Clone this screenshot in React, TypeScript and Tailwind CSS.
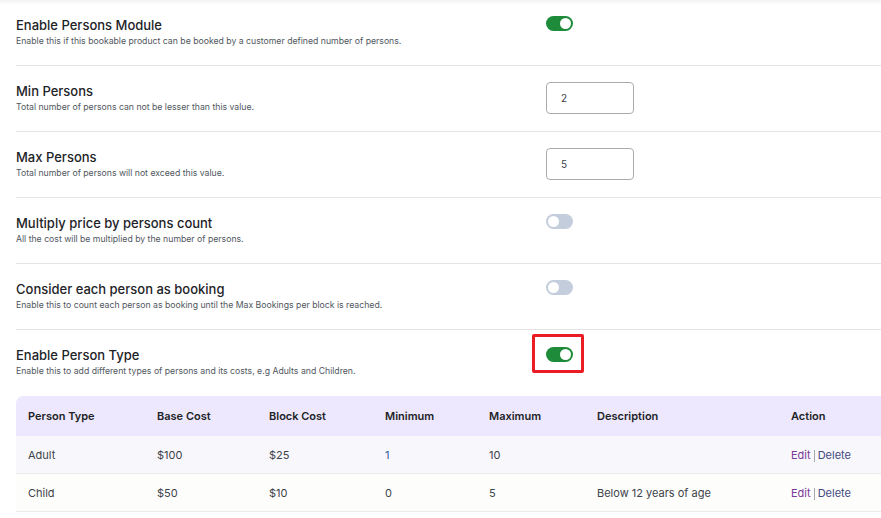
import React from 'react';

type Setting = {
  title: string;
  desc: string;
  control: 'on' | 'off' | 'input' | 'highlight';
  value?: string;
};

const settings: Setting[] = [
  { title: 'Enable Persons Module', desc: 'Enable this if this bookable product can be booked by a customer defined number of persons.', control: 'on' },
  { title: 'Min Persons', desc: 'Total number of persons can not be lesser than this value.', control: 'input', value: '2' },
  { title: 'Max Persons', desc: 'Total number of persons will not exceed this value.', control: 'input', value: '5' },
  { title: 'Multiply price by persons count', desc: 'All the cost will be multiplied by the number of persons.', control: 'off' },
  { title: 'Consider each person as booking', desc: 'Enable this to count each person as booking until the Max Bookings per block is reached.', control: 'off' },
  { title: 'Enable Person Type', desc: 'Enable this to add different types of persons and its costs, e.g Adults and Children.', control: 'highlight' },
];

const rows = [
  { type: 'Adult', base: '$100', block: '$25', min: '1', max: '10', desc: '' },
  { type: 'Child', base: '$50', block: '$10', min: '0', max: '5', desc: 'Below 12 years of age' },
];

function Toggle({ on }: { on: boolean }) {
  return (
    <div
      className={`flex h-[15px] w-[27px] items-center rounded-full px-[2px] ${
        on ? 'justify-end bg-[#1e8b3a]' : 'justify-start bg-[#c3cddb]'
      }`}
    >
      <span className="h-[11px] w-[11px] rounded-full bg-white" />
    </div>
  );
}

function Control({ s }: { s: Setting }) {
  if (s.control === 'input') {
    return (
      <div className="-mt-[1px] flex h-[32px] w-[88px] items-center rounded-[4px] border border-[#a9abae] px-[14px] text-[10px] text-[#3c434a]">
        {s.value}
      </div>
    );
  }
  if (s.control === 'highlight') {
    return (
      <div className="-ml-[14px] -mt-[13px] rounded-[2px] border-[3px] border-[#ec1c24] pb-[8px] pl-[11px] pr-[8px] pt-[10px]">
        <Toggle on />
      </div>
    );
  }
  return (
    <div className="-mt-[1px]">
      <Toggle on={s.control === 'on'} />
    </div>
  );
}

export default function App() {
  const cols = ['w-[129px]', 'w-[112px]', 'w-[116px]', 'w-[104px]', 'w-[108px]', 'w-[194px]', 'w-[102px]'];
  const heads = ['Person Type', 'Base Cost', 'Block Cost', 'Minimum', 'Maximum', 'Description', 'Action'];

  return (
    <div
      className="h-[518px] w-[881px] overflow-hidden bg-white pl-4 shadow-[inset_0_5px_5px_-4px_rgba(0,0,0,0.08)]"
      style={{ fontFamily: 'Inter, "Noto Sans", sans-serif' }}
    >
      {settings.map((s, i) => (
        <div
          key={s.title}
          className={`flex h-[66px] items-start pt-[17px] ${i < settings.length - 1 ? 'border-b border-[#e2e4e7]' : ''}`}
        >
          <div className="w-[530px]">
            <div className="text-[13px] font-medium leading-[16px] text-[#1d2327]">{s.title}</div>
            <div className="mt-[2px] text-[8.7px] leading-[12px] text-[#50575e]">{s.desc}</div>
          </div>
          <Control s={s} />
        </div>
      ))}

      <div className="flex w-[865px] flex-col text-[11px]">
        <div className="flex h-[40px] items-center rounded-tl-[7px] bg-[#ede8fd] font-semibold text-[#1d2327]">
          {heads.map((h, i) => (
            <div key={h} className={`${cols[i]} shrink-0 px-3`}>
              {h}
            </div>
          ))}
        </div>
        {rows.map((r, ri) => (
          <div
            key={r.type}
            className={`flex h-[38px] items-center border-b border-[#ebebeb] pt-[2px] text-[#3c434a] ${
              ri === 0 ? 'bg-[#f8f7fc]' : 'bg-[#fdfdfc]'
            }`}
          >
            <div className={`${cols[0]} shrink-0 px-3`}>{r.type}</div>
            <div className={`${cols[1]} shrink-0 px-3`}>{r.base}</div>
            <div className={`${cols[2]} shrink-0 px-3`}>{r.block}</div>
            <div className={`${cols[3]} shrink-0 px-3 ${ri === 0 ? 'text-[#2f5fa7]' : ''}`}>{r.min}</div>
            <div className={`${cols[4]} shrink-0 px-3`}>{r.max}</div>
            <div className={`${cols[5]} shrink-0 px-3`}>{r.desc}</div>
            <div className={`${cols[6]} flex shrink-0 items-center px-3`}>
              <span className="text-[#7b3a98]">Edit</span>
              <span className="mx-[3px] h-[12px] w-px bg-[#a7aaad]" />
              <span className="text-[#434a7e]">Delete</span>
            </div>
          </div>
        ))}
      </div>
    </div>
  );
}
